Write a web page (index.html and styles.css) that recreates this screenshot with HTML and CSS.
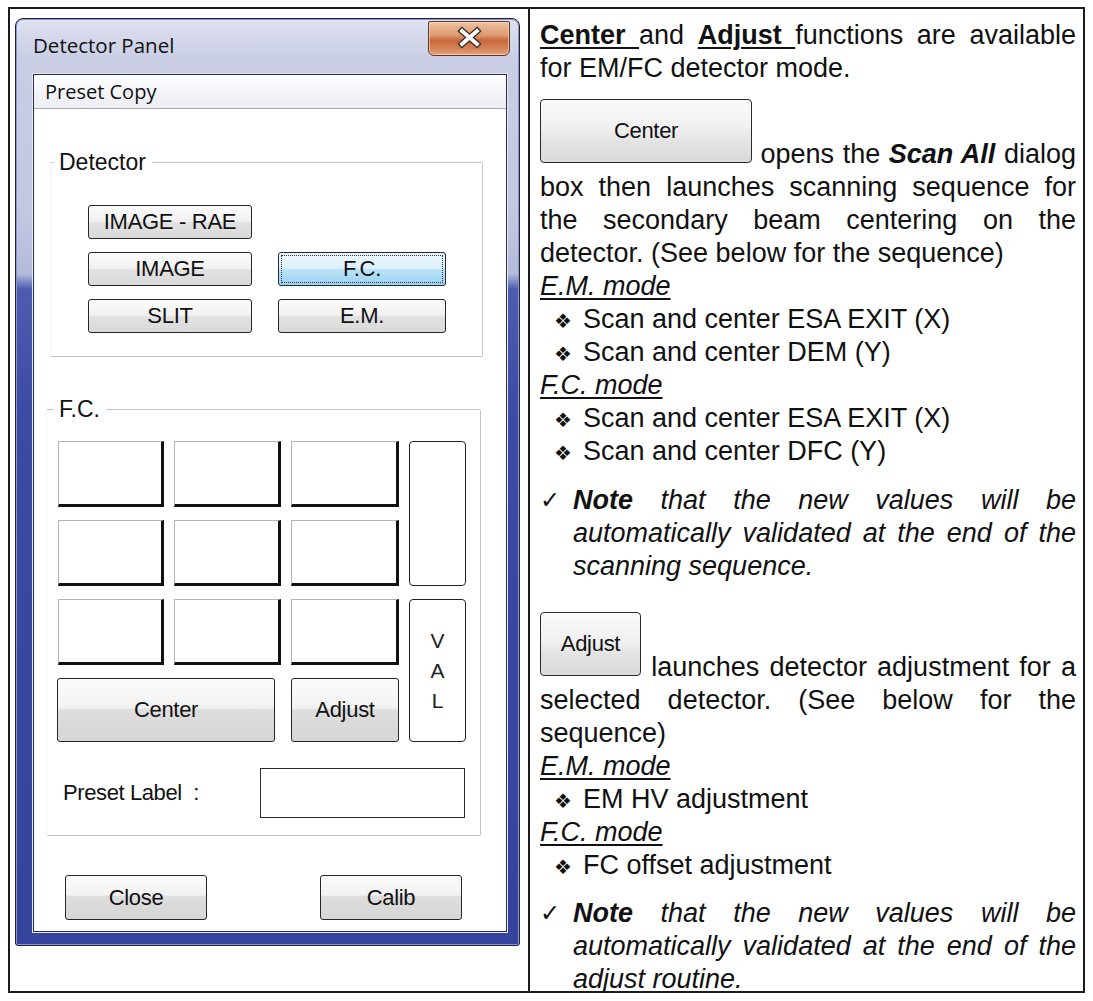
FILE: index.html
```html
<!DOCTYPE html>
<html>
<head>
<meta charset="utf-8">
<link rel="stylesheet" href="styles.css">
</head>
<body>
<div class="sheet">
  <div class="cell cell-left">
    <div class="window">
      <div class="titlebar">
        <span class="title">Detector Panel</span>
        <div class="close-btn">
          <svg width="82" height="35" viewBox="0 0 82 35">
            <path d="M34 10 L49 23 M49 10 L34 23" stroke="#3a2a20" stroke-width="6.5" stroke-linecap="square"/>
            <path d="M34 10 L49 23 M49 10 L34 23" stroke="#ffffff" stroke-width="3.8" stroke-linecap="square"/>
          </svg>
        </div>
      </div>
      <div class="client">
        <div class="menubar">Preset Copy</div>
        <fieldset class="group group-detector">
          <legend>Detector</legend>
          <div class="det-grid">
            <div class="btn">IMAGE - RAE</div>
            <div></div>
            <div class="btn">IMAGE</div>
            <div class="btn selected"><span class="focus">F.C.</span></div>
            <div class="btn">SLIT</div>
            <div class="btn">E.M.</div>
          </div>
        </fieldset>
        <fieldset class="group group-fc">
          <legend>F.C.</legend>
          <div class="fc-grid">
            <div class="slot"></div>
            <div class="slot"></div>
            <div class="slot"></div>
            <div class="side side-top"></div>
            <div class="slot"></div>
            <div class="slot"></div>
            <div class="slot"></div>
            <div class="slot"></div>
            <div class="slot"></div>
            <div class="slot"></div>
            <div class="side side-val"><span>V</span><span>A</span><span>L</span></div>
            <div class="btn btn-big btn-center">Center</div>
            <div class="btn btn-big btn-adjust">Adjust</div>
          </div>
          <div class="preset-row">
            <span class="preset-label">Preset Label&nbsp; :</span>
            <div class="preset-input"></div>
          </div>
        </fieldset>
        <div class="footer">
          <div class="btn btn-foot">Close</div>
          <div class="btn btn-foot">Calib</div>
        </div>
      </div>
    </div>
  </div>
  <div class="cell cell-right">
    <p class="para"><b class="ul">Center </b>and <b class="ul">Adjust </b>functions are available for EM/FC detector mode.</p>
    <p class="para para-btn"><span class="img-btn img-center">Center</span> opens the <b><i>Scan All</i></b> dialog box then launches scanning sequence for the secondary beam centering on the detector. (See below for the sequence)</p>
    <div class="mode">E.M. mode</div>
    <ul class="bullets">
      <li><span class="bul">&#x2756;</span>Scan and center ESA EXIT (X)</li>
      <li><span class="bul">&#x2756;</span>Scan and center DEM (Y)</li>
    </ul>
    <div class="mode">F.C. mode</div>
    <ul class="bullets">
      <li><span class="bul">&#x2756;</span>Scan and center ESA EXIT (X)</li>
      <li><span class="bul">&#x2756;</span>Scan and center DFC (Y)</li>
    </ul>
    <div class="note note-1">
      <span class="check">&#x2713;</span>
      <p><b>Note</b> that the new values will be automatically validated at the end of the scanning sequence.</p>
    </div>
    <p class="para para-adjust"><span class="img-btn img-adjust">Adjust</span> launches detector adjustment for a selected detector. (See below for the sequence)</p>
    <div class="mode">E.M. mode</div>
    <ul class="bullets">
      <li><span class="bul">&#x2756;</span>EM HV adjustment</li>
    </ul>
    <div class="mode">F.C. mode</div>
    <ul class="bullets">
      <li><span class="bul">&#x2756;</span>FC offset adjustment</li>
    </ul>
    <div class="note note-2">
      <span class="check">&#x2713;</span>
      <p><b>Note</b> that the new values will be automatically validated at the end of the adjust routine.</p>
    </div>
  </div>
</div>
</body>
</html>
```
FILE: styles.css
```css
html, body {
  margin: 0;
  padding: 0;
  background: #ffffff;
}

body {
  font-family: "Liberation Sans", Arial, sans-serif;
  color: #111111;
}

.sheet {
  margin: 7px 0 0 8px;
  width: 1077px;
  height: 986px;
  box-sizing: border-box;
  border: 2px solid #1a1a1a;
  display: grid;
  grid-template-columns: 520px 1fr;
}

.cell {
  box-sizing: border-box;
  min-width: 0;
}

.cell-left {
  border-right: 2px solid #1a1a1a;
  padding: 9px 8px 0 5px;
}

/* ---------- Window ---------- */
.window {
  height: 928px;
  box-sizing: border-box;
  border: 1px solid #1f2338;
  border-radius: 8px 8px 3px 3px;
  background: linear-gradient(180deg, #dfe2ef 0px, #c9cde4 40px, #c2c7e0 200px, #b3badb 255px, #4e5cb0 270px, #3b4aa2 400px, #34439c 100%);
  box-shadow: inset 0 0 0 1px #8d96cc;
  padding: 0 12px 13px 17px;
  display: flex;
  flex-direction: column;
}

.titlebar {
  height: 55px;
  display: flex;
  justify-content: space-between;
  align-items: flex-start;
  flex: none;
}

.title {
  font-family: "Open Sans", "Noto Sans", sans-serif;
  font-size: 20.5px;
  line-height: 24px;
  margin-top: 14px;
  color: #111;
}

.close-btn {
  width: 82px;
  height: 35px;
  margin-top: 2px;
  margin-right: -3px;
  box-sizing: border-box;
  border: 1px solid #5b3a28;
  border-radius: 2px 2px 6px 6px;
  background: linear-gradient(180deg, #efc2a0 0%, #dc9a70 40%, #c9663e 55%, #d48357 80%, #e6a57c 100%);
  box-shadow: inset 0 0 0 1px rgba(255, 230, 210, 0.55);
  display: flex;
}

.close-btn svg {
  display: block;
  margin: -1px;
}

.client {
  flex: 1;
  background: #ffffff;
  border: 1px solid #2b2e44;
  box-shadow: 0 0 0 1px #e6e8f4;
  display: flex;
  flex-direction: column;
}

.menubar {
  height: 33px;
  line-height: 33px;
  padding-left: 11px;
  font-family: "Open Sans", "Noto Sans", sans-serif;
  font-size: 20px;
  background: linear-gradient(180deg, #fdfdfe 0%, #f2f3f7 60%, #eceef3 100%);
  border-bottom: 1px solid #a5a7b0;
  flex: none;
}

/* ---------- Group boxes ---------- */
.group {
  margin: 0;
  padding: 0;
  border: 1px solid #c4c4c4;
  border-left-color: #f4f4f4;
  border-radius: 2px;
  min-width: 0;
}

.group legend {
  font-family: "Liberation Sans", Arial, sans-serif;
  font-size: 23px;
  line-height: 26px;
  padding: 0 6px 0 5px;
  color: #111;
}

.group-detector {
  margin: 40px 23px 0 16px;
  padding-bottom: 23px;
}

.group-detector legend {
  margin-left: 3px;
}

.det-grid {
  margin: 30px 0 0 37px;
  display: grid;
  grid-template-columns: 164px 168px;
  grid-auto-rows: 34px;
  column-gap: 26px;
  row-gap: 13px;
}

.btn {
  box-sizing: border-box;
  border: 1.5px solid #262626;
  border-radius: 3px;
  background: linear-gradient(180deg, #fbfbfb 0%, #f1f1f1 48%, #e2e2e2 52%, #d9d9d9 100%);
  display: flex;
  align-items: center;
  justify-content: center;
  font-size: 22px;
  color: #111;
  letter-spacing: -0.3px;
}

.btn.selected {
  background: linear-gradient(180deg, #eef8fe 0%, #dcf1fd 48%, #b9e2f8 52%, #9ed2f1 100%);
  border-color: #1c2b3c;
  padding: 2px;
}

.btn .focus {
  flex: 1;
  align-self: stretch;
  display: flex;
  align-items: center;
  justify-content: center;
  border: 1.5px dotted #333;
}

.group-fc {
  margin: 39px 25px 0 12px;
  padding-bottom: 17px;
}

.group-fc legend {
  margin-left: 7px;
}

.fc-grid {
  margin: 19px 0 0 11px;
  display: grid;
  grid-template-columns: 106px 107px 108px 57px;
  grid-template-rows: 66px 66px 66px 64px;
  column-gap: 10px;
  row-gap: 13px;
}

.slot {
  box-sizing: border-box;
  background: #ffffff;
  border-top: 1px solid #b5b5b5;
  border-left: 1px solid #b5b5b5;
  border-right: 3px solid #111;
  border-bottom: 3px solid #111;
}

.side {
  box-sizing: border-box;
  background: #fff;
  border: 1.5px solid #222;
  border-radius: 4px;
  grid-column: 4;
}

.side-top {
  grid-row: 1 / span 2;
}

.side-val {
  grid-row: 3 / span 2;
  display: flex;
  flex-direction: column;
  align-items: center;
  justify-content: center;
  font-size: 21px;
  line-height: 30px;
  color: #222;
}

.btn-big {
  background: linear-gradient(180deg, #fbfbfb 0%, #f2f2f2 46%, #dedede 50%, #d6d6d6 100%);
}

.btn-center {
  grid-column: 1 / span 2;
  grid-row: 4;
  width: 218px;
  margin-left: -1px;
}

.btn-adjust {
  grid-column: 3;
  grid-row: 4;
}

.preset-row {
  margin: 26px 0 0 16px;
  display: flex;
  align-items: center;
}

.preset-label {
  font-size: 22px;
  width: 197px;
  letter-spacing: -0.4px;
}

.preset-input {
  width: 205px;
  height: 50px;
  box-sizing: border-box;
  border: 1.5px solid #2a2a2a;
  background: #fff;
}

.footer {
  margin-top: 39px;
  padding-left: 31px;
  display: flex;
  gap: 113px;
}

.btn-foot {
  width: 142px;
  height: 45px;
  background: linear-gradient(180deg, #fbfbfb 0%, #f2f2f2 44%, #dddddd 48%, #d6d6d6 100%);
}

/* ---------- Right column ---------- */
.cell-right {
  padding: 10px 7px 0 10px;
  font-size: 27px;
  line-height: 33px;
  color: #111;
}

.para {
  margin: 0;
  text-align: justify;
}

.ul {
  text-decoration: underline;
  text-decoration-thickness: 2px;
  text-underline-offset: 3px;
}

.para-btn {
  margin-top: 14px;
}

.para-adjust {
  margin-top: 29px;
}

.img-btn {
  display: inline-block;
  overflow: hidden;
  box-sizing: border-box;
  border: 1.5px solid #2a2a2a;
  border-radius: 4px;
  background: linear-gradient(180deg, #fafafa 0%, #f0f0f0 45%, #e2e2e2 70%, #dadada 100%);
  font-size: 22px;
  text-align: center;
  vertical-align: baseline;
  color: #111;
  letter-spacing: -0.3px;
}

.img-center {
  width: 212px;
  height: 64px;
  line-height: 62px;
}

.img-adjust {
  width: 101px;
  height: 64px;
  line-height: 62px;
}

.mode {
  font-style: italic;
  text-decoration: underline;
  text-decoration-thickness: 2px;
  text-underline-offset: 3px;
}

.bullets {
  list-style: none;
  margin: 0;
  padding: 0;
}

.bullets li {
  padding-left: 14px;
}

.bul {
  display: inline-block;
  font-family: "DejaVu Sans", sans-serif;
  font-size: 20px;
  line-height: 1;
  width: 29px;
}

.note {
  display: flex;
  align-items: flex-start;
}

.note-1 {
  margin-top: 16px;
}

.note-2 {
  margin-top: 15px;
}

.check {
  flex: none;
  width: 33px;
  font-family: "DejaVu Sans", sans-serif;
  font-size: 24px;
  line-height: 33px;
}

.note p {
  flex: 1;
  min-width: 0;
  margin: 0;
  font-style: italic;
  text-align: justify;
}
```
